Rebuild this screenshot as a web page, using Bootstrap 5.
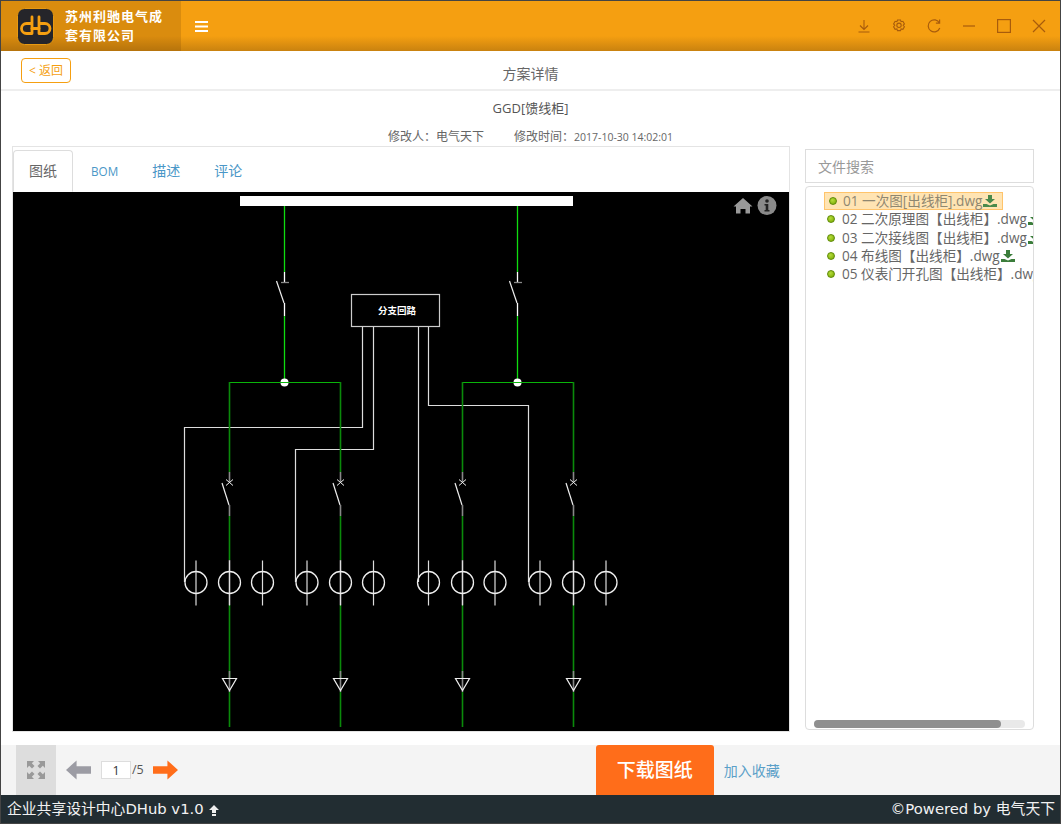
<!DOCTYPE html>
<html lang="zh-CN">
<head>
<meta charset="utf-8">
<title>方案详情</title>
<link rel="stylesheet" href="https://cdn.jsdelivr.net/npm/bootstrap@5.3.0/dist/css/bootstrap.min.css">
<style>
html,body{height:100%;margin:0;overflow:hidden;background:#fff}
body{font-family:"Open Sans","Noto Sans CJK SC",sans-serif;font-size:14px;color:#555}
.app-frame{width:1061px;height:824px;border:1px solid #444;overflow:hidden}
.top-bar{height:50px;flex:none;background:linear-gradient(to bottom,#f59f11 0,#f59f11 70%,#c9820f 100%)}
.brand-zone{width:180px;background:rgba(90,50,0,.17);padding-left:16px;gap:11px}
.brand-name{font-family:"Liberation Serif","Noto Sans CJK SC",serif;font-weight:700;font-size:13px;line-height:19px;color:#fff;letter-spacing:1px;width:100px}
.menu-trigger{margin-left:14px}
.win-tools{gap:0;padding-right:4px}
.win-tool{width:35px;height:24px;display:flex;align-items:center;justify-content:center}
.sub-head{height:40px;flex:none;border-bottom:2px solid #eee;display:grid;grid-template-columns:1fr auto 1fr}
.back-btn{width:50px;height:25px;margin:7px 0 0 20px;border:1px solid #f59f11;border-radius:4px;color:#f59f11;font-size:12px;line-height:23px;padding:0;background:#fff}
.sub-title{font-size:14px;line-height:18px;padding-top:14px;color:#666}
.plan-name{font-size:13px;line-height:18px;padding-top:8px;color:#555;text-align:center}
.plan-meta{font-size:12px;line-height:16px;padding-top:12px;color:#666;text-align:center;height:37px}
.plan-meta span+span{margin-left:30px}
.plan-meta .stamp{font-size:10.5px;margin-left:0!important}
.info-block{height:55px;flex:none}
.work-area{height:599px;flex:none;padding-left:11px}
.draw-panel{width:778px;height:586px;border:1px solid #e4e4e4;padding-top:3px;background:#fff}
.draw-tabs{height:42px;border-bottom:0;flex-wrap:nowrap}
.draw-tabs .nav-item{margin-right:2px}
.draw-tabs .nav-link{height:42px;width:auto;padding:0 15px;font-size:14px;line-height:40px;color:#4a97c7;border-radius:4px 4px 0 0}
.draw-tabs .nav-link.latin{font-size:11.7px}
.draw-tabs .nav-link.active{color:#666;border-color:#ddd #ddd #fff;margin-bottom:0}
.draw-canvas{display:block;width:776px;height:539px;background:#000}
.side-col{width:229px;margin-left:15px;padding-top:3px}
.file-search{height:34px;border:1px solid #ddd;border-radius:0;padding:0 12px;font-size:14px;color:#555;width:100%;display:block;background:#fff}
.file-search::placeholder{color:#999}
.file-tree{height:544px;margin-top:3px;border:1px solid #ddd;border-radius:4px;overflow:hidden;position:relative;padding-top:5px;padding-left:18px;white-space:nowrap}
.tree-row{height:18.2px;line-height:18px;font-size:13.6px;color:#666;display:flex;align-items:center}
.tree-row.is-current{height:18px;width:179px;margin-bottom:.4px;background:#ffe4b3;border:1px solid #ffc46b;color:#8f8770;padding-left:4px}
.tree-row:not(.is-current){padding-left:3px}
.tree-dot{width:8px;height:8px;flex:none;margin-right:6px;border-radius:50%;background:radial-gradient(circle at 40% 35%,#b5dc3a,#77a800);border:1px solid #5f8a08}
.tree-row:not(.is-current) .tree-dot{margin-right:7px}
.dl-mark{flex:none;margin-left:1px}
.tree-scroll{position:absolute;left:8px;bottom:1px;width:211px;height:8px;background:#e9e9e9;border-radius:4px}
.tree-scroll i{display:block;width:187px;height:8px;background:#8f8f8f;border-radius:4px}
.tool-bar{height:50px;flex:none;background:#f4f4f4;padding-left:15px}
.full-btn{width:40px;height:50px;background:#ddd;display:flex;align-items:center;justify-content:center;flex:none}
.prev-arrow{margin-left:10px}
.page-box{width:30px;height:18px;border:1px solid #ddd;background:#fff;text-align:center;font-size:12.5px;line-height:16px;color:#333;padding:0;margin-left:10px}
.page-total{font-size:12.5px;color:#555;margin:0 9px 0 1px}
.dl-btn{width:118px;height:50px;margin-left:418px;background:#ff6d1a;color:#fff;font-size:19px;font-weight:500;border:0;border-radius:3px 3px 0 0;padding:0;line-height:50px}
.fav-link{margin-left:10px;color:#5a9fc8;font-size:14px;text-decoration:none}
.status-bar{height:28px;flex:none;background:#222d32;color:#f2f2f2;font-family:"DejaVu Sans","Noto Sans CJK SC",sans-serif;font-size:14.8px;line-height:28px;padding:0 5px 0 6px;white-space:nowrap}
.up-mark{margin-left:1px}
</style>
</head>
<body>
<div class="app-frame d-flex flex-column">
  <header class="top-bar d-flex align-items-stretch">
    <div class="brand-zone d-flex align-items-center">
      <svg width="37" height="37" viewBox="0 0 37 37" aria-hidden="true"><rect x=".5" y=".5" width="36" height="36" rx="7" fill="#25252a" stroke="#e89a12"/><g fill="none" stroke="#f59f11" stroke-width="2.800" stroke-linecap="round" stroke-linejoin="round"><path d="M15 9V25.500H9.500a5 5 0 0 1 0-10H15"/><path d="M22 9V25.500H28a5 5 0 0 0 0-10H22"/><path d="M15 20.500H22"/></g></svg>
      <div class="brand-name">苏州利驰电气成套有限公司</div>
    </div>
    <div class="menu-trigger d-flex align-items-center">
      <svg width="13" height="11" viewBox="0 0 13 11" aria-hidden="true"><path fill="#fff" d="M0 0h13v2H0zM0 4.500h13v2H0zM0 9h13v2H0z"/></svg>
    </div>
    <div class="win-tools d-flex align-items-center ms-auto">
      <span class="win-tool"><svg width="16" height="16" viewBox="0 0 16 16" fill="none" stroke="#a85c0c" stroke-width="1.100"><path d="M8 2v9M4 7.500l4 4 4-4M2.500 14h11"/></svg></span>
      <span class="win-tool"><svg width="16" height="16" viewBox="0 0 16 16" fill="none" stroke="#a85c0c" stroke-width="1.100"><path d="M6.500 2h3l.6 1.700 1.800-.4 1.500 2.600-1.200 1.400 1.200 1.400-1.500 2.600-1.800-.4-.6 1.700h-3l-.6-1.700-1.800.4-1.500-2.600 1.200-1.400-1.200-1.400 1.500-2.600 1.800.4z"/><circle cx="8" cy="7.300" r="2.200"/></svg></span>
      <span class="win-tool"><svg width="16" height="16" viewBox="0 0 16 16" fill="none" stroke="#a85c0c" stroke-width="1.200"><path d="M13.500 5A6 6 0 1 0 13.800 10M13.600 1.500V5.200H9.900"/></svg></span>
      <span class="win-tool"><svg width="16" height="16" viewBox="0 0 16 16" fill="none" stroke="#a85c0c" stroke-width="1.200"><path d="M2 8h12"/></svg></span>
      <span class="win-tool"><svg width="16" height="16" viewBox="0 0 16 16" fill="none" stroke="#a85c0c" stroke-width="1.200"><rect x="1.600" y="1.600" width="12.800" height="12.800"/></svg></span>
      <span class="win-tool"><svg width="16" height="16" viewBox="0 0 16 16" fill="none" stroke="#a85c0c" stroke-width="1.200"><path d="M2 2l12 12M14 2L2 14"/></svg></span>
    </div>
  </header>

  <div class="sub-head">
    <div><button type="button" class="back-btn">&lt; 返回</button></div>
    <div class="sub-title">方案详情</div>
    <div></div>
  </div>

  <div class="info-block">
    <div class="plan-name">GGD[馈线柜]</div>
    <div class="plan-meta"><span>修改人：电气天下</span><span>修改时间：</span><span class="stamp">2017-10-30 14:02:01</span></div>
  </div>

  <main class="work-area d-flex align-items-start">
    <section class="draw-panel">
      <ul class="nav nav-tabs draw-tabs">
        <li class="nav-item"><a class="nav-link active" href="#">图纸</a></li>
        <li class="nav-item"><a class="nav-link latin" href="#">BOM</a></li>
        <li class="nav-item"><a class="nav-link" href="#">描述</a></li>
        <li class="nav-item"><a class="nav-link" href="#">评论</a></li>
      </ul>
      <svg class="draw-canvas" viewBox="13 192 776 539" aria-label="图纸">
        <defs>
          <g id="meter"><path d="M0 -22V23" stroke="#ddd" stroke-width="1.200" fill="none"/><circle r="11" cx="0" cy="0" fill="none" stroke="#eee" stroke-width="1.300"/></g>
          <g id="feeder" fill="none">
            <path d="M.5 382V472M.5 516V560M.5 605V678M.5 692V727" stroke="#0a8a0a" stroke-width="1.600"/>
            <path d="M.5 472V482M.5 505V516M.5 560V605M.5 671V692" stroke="#888" stroke-width="1.600"/>
            <path d="M-7 483L0 505" stroke="#eee" stroke-width="1.200"/>
            <path d="M-3 479.500L4 485.500M4 479.500L-3 485.500" stroke="#eee"/>
            <path d="M-6.500 678.500H7.500L.5 690.500Z" stroke="#eee" stroke-width="1.200"/>
          </g>
          <g id="incomer" fill="none">
            <path d="M.5 206V272M.5 316V382" stroke="#0fdc0f" stroke-width="1.300"/>
            <path d="M.5 272V282M.5 303V316" stroke="#fff" stroke-width="1.300"/>
            <path d="M-3 282.500H5" stroke="#888" stroke-width="1.300"/>
            <path d="M-7.500 281L0 303" stroke="#eee" stroke-width="1.200"/>
            <circle cx=".5" cy="382.500" r="4" fill="#fff" stroke="none"/>
            <path d="M-3.500 382.500H4.500" stroke="#0fdc0f"/>
          </g>
        </defs>
        <rect x="240" y="196" width="333" height="10" fill="#fff"/>
        <use href="#incomer" x="284"/>
        <use href="#incomer" x="517"/>
        <path d="M229 382.500H340.500M462 382.500H573.500" stroke="#0ab40a" stroke-width="1.200" fill="none"/>
        <rect x="351.500" y="294.500" width="88" height="32" fill="#000" stroke="#ccc" stroke-width="1.200"/>
        <text x="397" y="314" fill="#fff" font-size="9.500" font-weight="700" text-anchor="middle" font-family="'Noto Sans CJK SC',serif">分支回路</text>
        <g fill="none" stroke="#ddd" stroke-width="1.200">
          <path d="M362.500 327V427.500H184.500V582"/>
          <path d="M373.500 327V449.500H295.500V582"/>
          <path d="M418.500 327V582"/>
          <path d="M428.500 327V405.500H528.500V582"/>
        </g>
        <use href="#feeder" x="229"/>
        <use href="#feeder" x="340"/>
        <use href="#feeder" x="462"/>
        <use href="#feeder" x="573"/>
        <g transform="translate(0 582.500)">
          <use href="#meter" x="196"/><use href="#meter" x="229.500"/><use href="#meter" x="262.500"/>
          <use href="#meter" x="307"/><use href="#meter" x="340.500"/><use href="#meter" x="373.500"/>
          <use href="#meter" x="428.500"/><use href="#meter" x="462.500"/><use href="#meter" x="495"/>
          <use href="#meter" x="540"/><use href="#meter" x="573.500"/><use href="#meter" x="606"/>
        </g>
        <path fill="#999" d="M743 198l9.500 8.500h-2.500v7h-4.500v-4.500h-5v4.500H736v-7h-2.500z"/>
        <circle cx="767" cy="205.500" r="9.500" fill="#8a8a8a"/>
        <circle cx="767" cy="201" r="1.800" fill="#222"/>
        <path fill="#222" d="M764.500 204h3.800v6h1.200v1.500h-5V210h1.200v-4.500h-1.200z"/>
      </svg>
    </section>

    <aside class="side-col">
      <input class="file-search" type="text" placeholder="文件搜索">
      <div class="file-tree">
        <div class="tree-row is-current"><span class="tree-dot"></span>01 一次图[出线柜].dwg<svg class="dl-mark" width="14" height="12" viewBox="0 0 14 12"><path fill="#4b8a4b" d="M5 0h4v4h3L7 8.500 2 4h3zM0 9h3.500L7 10.500 10.500 9H14v3H0z"/></svg></div>
        <div class="tree-row"><span class="tree-dot"></span>02 二次原理图【出线柜】.dwg<svg class="dl-mark" width="14" height="12" viewBox="0 0 14 12"><path fill="#3b7d3b" d="M5 0h4v4h3L7 8.500 2 4h3zM0 9h3.500L7 10.500 10.500 9H14v3H0z"/></svg></div>
        <div class="tree-row"><span class="tree-dot"></span>03 二次接线图【出线柜】.dwg<svg class="dl-mark" width="14" height="12" viewBox="0 0 14 12"><path fill="#3b7d3b" d="M5 0h4v4h3L7 8.500 2 4h3zM0 9h3.500L7 10.500 10.500 9H14v3H0z"/></svg></div>
        <div class="tree-row"><span class="tree-dot"></span>04 布线图【出线柜】.dwg<svg class="dl-mark" width="14" height="12" viewBox="0 0 14 12"><path fill="#3b7d3b" d="M5 0h4v4h3L7 8.500 2 4h3zM0 9h3.500L7 10.500 10.500 9H14v3H0z"/></svg></div>
        <div class="tree-row"><span class="tree-dot"></span>05 仪表门开孔图【出线柜】.dwg</div>
        <div class="tree-scroll"><i></i></div>
      </div>
    </aside>
  </main>

  <div class="tool-bar d-flex align-items-center">
    <div class="full-btn"><svg width="20" height="20" viewBox="0 0 20 20" fill="#999"><path d="M1 1h7L5.800 3.200 8.500 6 6 8.500 3.200 5.800 1 8zM19 1v7l-2.200-2.200L14 8.500 11.500 6l2.700-2.800L12 1zM1 19v-7l2.200 2.200L6 11.500 8.500 14l-2.700 2.800L8 19zM19 19h-7l2.200-2.200L11.500 14l2.500-2.500 2.800 2.700L19 12z"/></svg></div>
    <svg class="prev-arrow" width="25" height="20" viewBox="0 0 26 20" aria-hidden="true"><path fill="#9c9ca4" d="M0 10L11 0v6h15v8H11v6z"/></svg>
    <input class="page-box" type="text" value="1">
    <span class="page-total">/5</span>
    <svg width="25" height="20" viewBox="0 0 26 20" aria-hidden="true"><path fill="#ff6d1a" d="M26 10L15 0v6H0v8h15v6z"/></svg>
    <button type="button" class="dl-btn">下载图纸</button>
    <a href="#" class="fav-link">加入收藏</a>
  </div>

  <footer class="status-bar d-flex justify-content-between">
    <span>企业共享设计中心DHub v1.0 <svg class="up-mark" width="10" height="11" viewBox="0 0 10 11"><path fill="#eee" d="M5 0l5 5H7v3H3V5H0zM3 9h4v2H3z"/></svg></span>
    <span>©Powered by 电气天下</span>
  </footer>
</div>
</body>
</html>
